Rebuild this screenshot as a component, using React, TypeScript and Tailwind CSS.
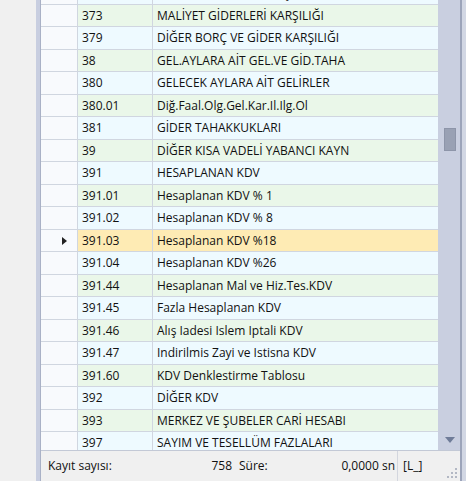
const rows: [string, string][] = [
  ['372', 'KIDEM TAZMİNATI KARŞILIĞI'],
  ['373', 'MALİYET GİDERLERİ KARŞILIĞI'],
  ['379', 'DİĞER BORÇ VE GİDER KARŞILIĞI'],
  ['38', 'GEL.AYLARA AİT GEL.VE GİD.TAHA'],
  ['380', 'GELECEK AYLARA AİT GELİRLER'],
  ['380.01', 'Diğ.Faal.Olg.Gel.Kar.Il.Ilg.Ol'],
  ['381', 'GİDER TAHAKKUKLARI'],
  ['39', 'DİĞER KISA VADELİ YABANCI KAYN'],
  ['391', 'HESAPLANAN KDV'],
  ['391.01', 'Hesaplanan KDV % 1'],
  ['391.02', 'Hesaplanan KDV % 8'],
  ['391.03', 'Hesaplanan KDV %18'],
  ['391.04', 'Hesaplanan KDV %26'],
  ['391.44', 'Hesaplanan Mal ve Hiz.Tes.KDV'],
  ['391.45', 'Fazla Hesaplanan KDV'],
  ['391.46', 'Alış Iadesi Islem Iptali KDV'],
  ['391.47', 'Indirilmis Zayi ve Istisna KDV'],
  ['391.60', 'KDV Denklestirme Tablosu'],
  ['392', 'DİĞER KDV'],
  ['393', 'MERKEZ VE ŞUBELER CARİ HESABI'],
  ['397', 'SAYIM VE TESELLÜM FAZLALARI'],
];

const SELECTED = 11;

export default function App() {
  return (
    <div
      className="w-[466px] h-[481px] flex bg-[#f0f0f0] text-[12px] text-[#111] overflow-hidden"
      style={{ fontFamily: '"Open Sans", "Noto Sans", sans-serif' }}>
      <div className="w-[36px] shrink-0" />
      {/* left frame */}
      <div className="w-[4px] shrink-0 bg-[#c8cee0]" />
      <div className="w-[1px] shrink-0 bg-[#a9b1c6]" />

      <div className="flex flex-col w-[419px] shrink-0">
        <div className="flex h-[450px]">
          {/* grid */}
          <div className="w-[397px] overflow-hidden">
            <div className="mt-[-17px]">
              {rows.map((r, i) => {
                const h = i === 0 ? 'h-[22px]' : i % 2 === 1 ? 'h-[22px]' : 'h-[23px]';
                const bg =
                  i === SELECTED
                    ? 'bg-[#feebb4]'
                    : i % 2 === 1
                      ? 'bg-[#eaf7e9]'
                      : 'bg-[#eefaff]';
                return (
                  <div key={i} className={`flex ${h} border-b border-[#d0d6e0]`}>
                    <div className="w-[37px] shrink-0 bg-[#f8fafd] border-r border-[#d0d6e0] flex items-center">
                      {i === SELECTED && (
                        <svg width="5" height="8" viewBox="0 0 5 8" className="ml-[21px]">
                          <path d="M0 0 L5 4 L0 8 Z" fill="#222" />
                        </svg>
                      )}
                    </div>
                    <div className={`w-[75px] shrink-0 ${bg} border-r border-[#d0d6e0] flex items-center pl-[4px]`}>
                      {r[0]}
                    </div>
                    <div className={`flex-1 ${bg} flex items-center pl-[4px] whitespace-nowrap`}>
                      {r[1]}
                    </div>
                  </div>
                );
              })}
            </div>
          </div>

          {/* scrollbar */}
          <div className="w-[22px] shrink-0 bg-[#c9cfe0] relative">
            <div className="absolute left-[6px] top-[128px] w-[12px] h-[23px] bg-[#99a1b4] border border-[#8d95a9]" />
            <svg width="10" height="6" viewBox="0 0 10 6" className="absolute left-[7px] top-[437px]">
              <path d="M0 0 L10 0 L5 6 Z" fill="#6f7c98" />
            </svg>
          </div>
        </div>

        {/* footer */}
        <div className="h-[31px] border-t border-[#c3c9d6] flex items-center relative">
          <span className="pl-[7px] w-[112px]">Kayıt sayısı:</span>
          <span className="w-[79px] text-right">758</span>
          <span className="pl-[7px] w-[68px]">Süre:</span>
          <span className="w-[95px] text-right">0,0000 sn</span>
          <div className="w-[1px] h-full bg-[#d3d6de] ml-[2px]" />
          <span className="pl-[5px]">[L_]</span>
          <svg width="10" height="10" viewBox="0 0 10 10" className="absolute right-[3px] bottom-[3px]">
            {[
              [8, 0],
              [8, 4],
              [4, 4],
              [8, 8],
              [4, 8],
              [0, 8],
            ].map(([x, y], k) => (
              <rect key={k} x={x} y={y} width="2" height="2" fill="#b3b8c4" />
            ))}
          </svg>
        </div>
      </div>

      {/* right frame */}
      <div className="w-[2px] shrink-0 bg-[#9ca4ba]" />
      <div className="w-[4px] shrink-0 bg-[#d2d7e4]" />
    </div>
  );
}
